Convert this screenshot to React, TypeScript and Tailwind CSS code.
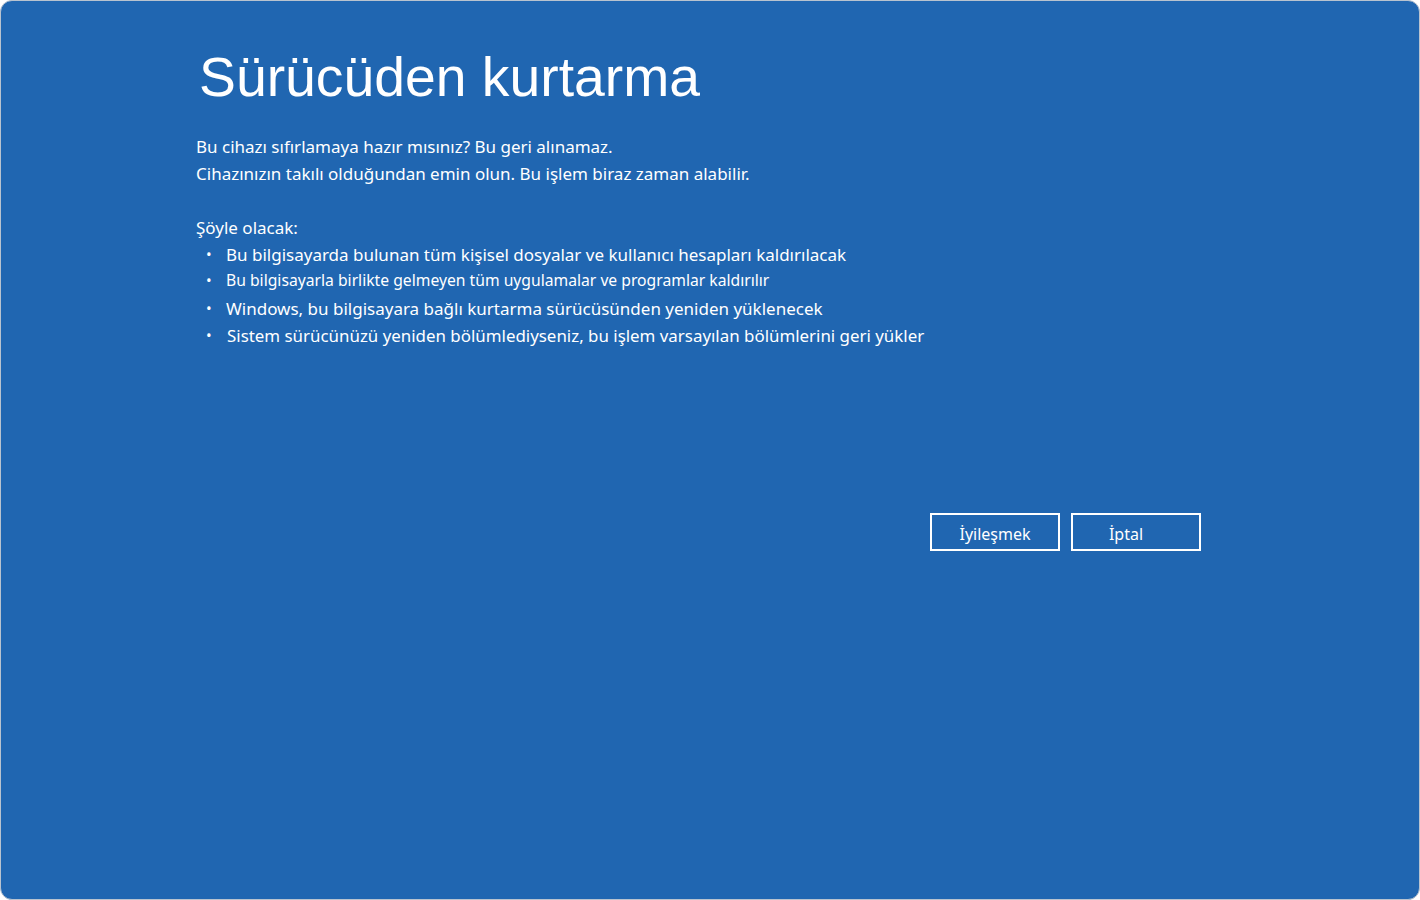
export default function App() {
  const items = [
    { text: 'Bu bilgisayarda bulunan tüm kişisel dosyalar ve kullanıcı hesapları kaldırılacak', small: false },
    { text: 'Bu bilgisayarla birlikte gelmeyen tüm uygulamalar ve programlar kaldırılır', small: true },
    { text: 'Windows, bu bilgisayara bağlı kurtarma sürücüsünden yeniden yüklenecek', small: false },
    { text: 'Sistem sürücünüzü yeniden bölümlediyseniz, bu işlem varsayılan bölümlerini geri yükler', small: false },
  ];

  return (
    <div className="h-[900px] w-[1420px] bg-white">
      <div className="flex h-full flex-col rounded-[12px] border border-[#b9c3cf] bg-[#2066b1] text-white">
        <div className="pl-[195px] pr-[218px] pt-[40px]">
          {/* Title */}
          <h1 className="font-['Liberation_Sans',Arial,sans-serif] text-[55.3px] leading-[72px] pl-[3px]">
            Sürücüden kurtarma
          </h1>

          {/* Body */}
          <div className="mt-[20px] font-['Noto_Sans',sans-serif] text-[17px] leading-[27px]">
            <p>Bu cihazı sıfırlamaya hazır mısınız? Bu geri alınamaz.</p>
            <p>Cihazınızın takılı olduğundan emin olun. Bu işlem biraz zaman alabilir.</p>
            <p className="mt-[27px]">Şöyle olacak:</p>
            <ul>
              <li className="flex h-[27px] items-center">
                <span className="w-[30px] pl-[10px] text-[15px]">•</span>
                <span>{items[0].text}</span>
              </li>
              <li className="flex h-[25px] items-center">
                <span className="w-[30px] pl-[10px] text-[15px]">•</span>
                <span className="text-[15.7px]">{items[1].text}</span>
              </li>
              <li className="flex h-[29px] items-end">
                <span className="w-[30px] pl-[10px] text-[15px]">•</span>
                <span>{items[2].text}</span>
              </li>
              <li className="flex h-[27px] items-end">
                <span className="w-[31px] pl-[10px] text-[15px]">•</span>
                <span className="text-[16.9px]">{items[3].text}</span>
              </li>
            </ul>
          </div>

          {/* Buttons */}
          <div className="mt-[164px] flex justify-end gap-[11px]">
            <button className="h-[38px] w-[130px] border-2 border-white pt-[3px] font-['Noto_Sans',sans-serif] text-[16px]">
              İyileşmek
            </button>
            <button className="h-[38px] w-[130px] border-2 border-white pt-[3px] pr-[20px] font-['Noto_Sans',sans-serif] text-[16px]">
              İptal
            </button>
          </div>
        </div>
      </div>
    </div>
  );
}
